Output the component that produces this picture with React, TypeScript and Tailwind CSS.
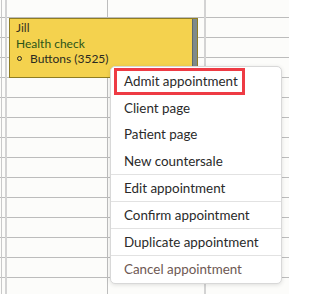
import React from "react";

const columns = [
  { w: "w-[2px]", line: "border-r border-[#c9c9c9]" },
  { w: "w-[5px]", line: "border-r-2 border-[#d3d3d3]" },
  { w: "w-[101px]", line: "border-r border-[#bdbdbd]" },
  { w: "w-[98px]", line: "border-r-2 border-[#d3d3d3]" },
  { w: "flex-1", line: "" },
];

const rows = Array.from({ length: 13 });

const menuTop = ["Admit appointment", "Client page", "Patient page", "New countersale"];
const menuBottom = ["Edit appointment", "Confirm appointment", "Duplicate appointment"];

const Grid = () => (
  <div className="flex h-full">
    {columns.map((col, i) => (
      <div key={i} className={`${col.w} ${col.line} flex flex-col shrink-0`}>
        <div className="h-[18px] border-b border-[#bcbcbc]" />
        {rows.map((_, r) => (
          <div key={r} className="h-[20px] border-b border-[#bcbcbc]" />
        ))}
      </div>
    ))}
  </div>
);

const Appointment = () => (
  <div className="absolute left-[9px] top-[18px] w-[189px] h-[60px] flex border border-[#8f7d22] bg-[#f4d24e]">
    <div className="flex-1 pl-[6px] pt-[1px] text-[12px] leading-[15.5px] font-['Lato',sans-serif]">
      <div className="text-[#36321f]">Jill</div>
      <div className="text-[#2a5418]">Health check</div>
      <div className="flex items-center text-[#2a2a22]">
        <span className="ml-[1px] w-[5px] h-[5px] rounded-full border border-[#2a2a22]" />
        <span className="ml-[8px]">Buttons (3525)</span>
      </div>
    </div>
    <div className="w-[5px] bg-[#7e8a8a] border-l border-[#5f6a6a]" />
  </div>
);

const ContextMenu = () => (
  <div className="absolute left-[110px] top-[66px] w-[172px] py-[1px] bg-white border border-[#d8d8d8] rounded-[5px] shadow-[0_1px_4px_rgba(0,0,0,0.12)] font-['Lato',sans-serif] text-[13.4px] text-[#2a2a2a]">
    {menuTop.map((label, i) => (
      <div key={label} className="h-[26.5px] flex items-center pl-[13px]">
        {i === 0 ? (
          <span className="-ml-[10px] w-[131px] h-[27px] flex items-center pl-[7px] border-[3px] border-[#ee3b44]">
            {label}
          </span>
        ) : (
          label
        )}
      </div>
    ))}
    {menuBottom.map((label) => (
      <div
        key={label}
        className="h-[27px] flex items-center pl-[13px] border-t border-[#e2e2e2]"
      >
        {label}
      </div>
    ))}
    <div className="h-[27px] flex items-center pl-[13px] border-t border-[#e2e2e2] text-[#6e5853]">
      Cancel appointment
    </div>
  </div>
);

export default function App() {
  return (
    <div className="relative w-[289px] h-[294px] overflow-hidden bg-[#fcfcfa]">
      <Grid />
      <Appointment />
      <ContextMenu />
    </div>
  );
}
